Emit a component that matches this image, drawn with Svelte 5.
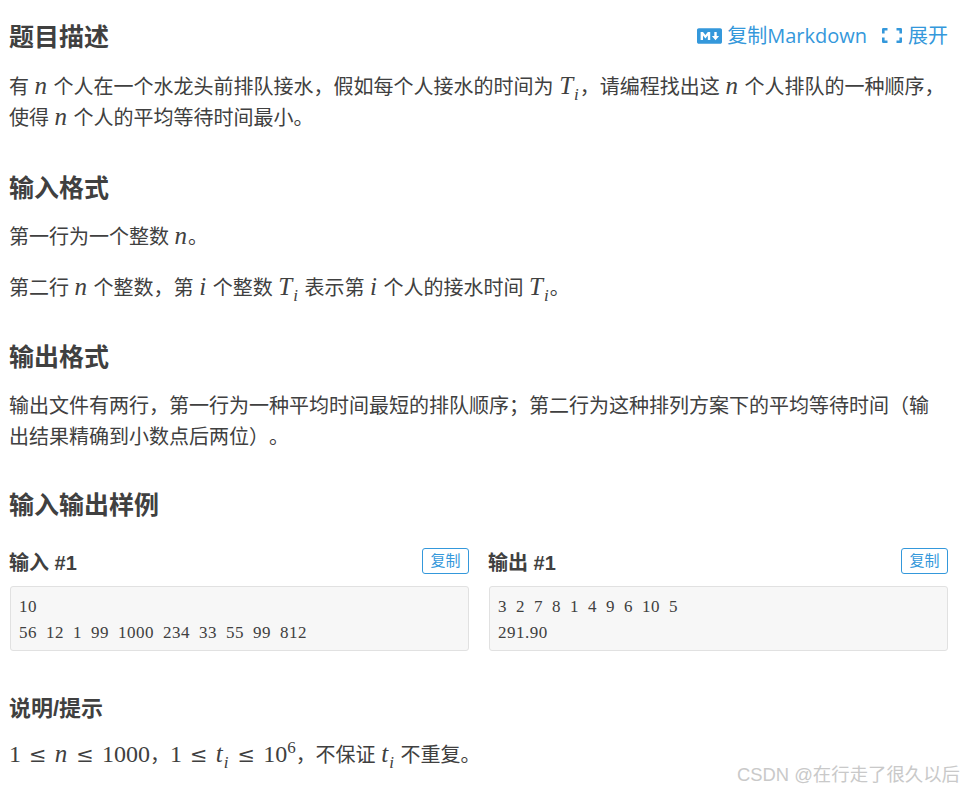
<script>
  const samples = [
    { title: '输入 #1', lines: ['10', '56 12 1 99 1000 234 33 55 99 812'] },
    { title: '输出 #1', lines: ['3 2 7 8 1 4 9 6 10 5', '291.90'] }
  ]
</script>

<main class="page">
  <header class="title-row">
    <h2>题目描述</h2>
    <div class="actions">
      <a class="link">
        <svg class="icon-md" viewBox="0 0 640 512"><path fill="currentColor" d="M593.8 59.1H46.2C20.7 59.1 0 79.8 0 105.2v301.5c0 25.5 20.7 46.2 46.2 46.2h547.7c25.5 0 46.2-20.7 46.1-46.1V105.2c0-25.4-20.7-46.1-46.2-46.1zM338.5 360.6H277v-120l-61.5 76.9-61.5-76.9v120H92.3V151.4h61.5l61.5 76.9 61.5-76.9h61.5v209.2zm135.3 3.1L381.5 256H443V151.4h61.5V256H566z"/></svg>
        复制Markdown
      </a>
      <a class="link">
        <svg class="icon-expand" viewBox="0 0 20 15" fill="none" stroke="currentColor" stroke-width="2.6" stroke-linejoin="round">
          <path d="M1.3 5.5V1.3H5.5M14.5 1.3H18.7V5.5M18.7 9.5V13.7H14.5M5.5 13.7H1.3V9.5"/>
        </svg>
        展开
      </a>
    </div>
  </header>
  <p class="first">有 <i class="m">n</i> 个人在一个水龙头前排队接水，假如每个人接水的时间为 <i class="m">T<sub>i</sub></i>，请编程找出这 <i class="m">n</i> 个人排队的一种顺序，<br />使得 <i class="m">n</i> 个人的平均等待时间最小。</p>

  <h2 class="section s1">输入格式</h2>
  <p>第一行为一个整数 <i class="m">n</i>。</p>
  <p class="next">第二行 <i class="m">n</i> 个整数，第 <i class="m">i</i> 个整数 <i class="m">T<sub>i</sub></i> 表示第 <i class="m">i</i> 个人的接水时间 <i class="m">T<sub>i</sub></i>。</p>

  <h2 class="section s2">输出格式</h2>
  <p>输出文件有两行，第一行为一种平均时间最短的排队顺序；第二行为这种排列方案下的平均等待时间（输<br />出结果精确到小数点后两位）。</p>

  <h2 class="section s3">输入输出样例</h2>
  <div class="samples">
    {#each samples as s}
      <section class="sample">
        <div class="sample-head">
          <h3>{s.title}</h3>
          <button>复制</button>
        </div>
        <pre>{s.lines.join('\n')}</pre>
      </section>
    {/each}
  </div>

  <h3 class="hint-title">说明/提示</h3>
  <p class="hint"><span class="r">1</span> <span class="op">≤</span> <i class="m">n</i> <span class="op">≤</span> <span class="r">1000</span>，<span class="r">1</span> <span class="op">≤</span> <i class="m">t<sub>i</sub></i> <span class="op">≤</span> <span class="r">10<sup>6</sup></span>，不保证 <i class="m">t<sub>i</sub></i> 不重复。</p>
</main>

<div class="watermark">CSDN @在行走了很久以后</div>

<style>
  :global(body) {
    background: #fff;
  }

  .page {
    padding: 18px 15px 0 10px;
    height: 775px;
    overflow: hidden;
    color: #404040;
    font-family: "Liberation Sans", "Noto Sans CJK SC", sans-serif;
    font-size: 20px;
    text-spacing-trim: space-all;
  }

  .title-row {
    display: flex;
    justify-content: space-between;
    align-items: center;
    height: 38px;
  }

  h2 {
    margin: 0 0 0 -1px;
    font-size: 25px;
    line-height: 38px;
    font-weight: 700;
  }

  .s1 {
    margin-top: 35px;
  }

  .s2 {
    margin-top: 34px;
  }

  .s3 {
    margin-top: 33px;
  }

  .actions {
    display: flex;
    gap: 15px;
    margin-top: -3px;
  }

  .link {
    display: flex;
    align-items: center;
    gap: 5px;
    color: #3498db;
    font-family: "Open Sans", "Noto Sans CJK SC", sans-serif;
    font-size: 20px;
    line-height: 30px;
  }

  .icon-md {
    width: 25px;
    height: 20px;
  }

  .icon-expand {
    width: 20px;
    height: 15px;
    margin-right: 1px;
  }

  p {
    margin: 15px 0 0 -1px;
    line-height: 31px;
    white-space: nowrap;
  }

  .first {
    margin-top: 16px;
  }

  .next {
    margin-top: 20px;
  }

  .m {
    font-family: "Liberation Serif", serif;
    font-size: 25px;
    font-style: italic;
    line-height: 0;
    letter-spacing: 1px;
  }

  .r {
    font-family: "Liberation Serif", serif;
    font-size: 24px;
    line-height: 0;
  }

  .op {
    font-family: "DejaVu Serif", serif;
    font-size: 21px;
    line-height: 0;
    margin: 0 2.5px;
  }

  sub,
  sup {
    font-size: 17px;
    line-height: 0;
  }

  .samples {
    display: grid;
    grid-template-columns: 1fr 1fr;
    gap: 20px;
    margin-top: 22px;
  }

  .sample-head {
    display: flex;
    justify-content: space-between;
    align-items: center;
    height: 30px;
  }

  h3 {
    margin: 0 0 0 -1px;
    font-size: 20px;
    font-weight: 700;
  }

  button {
    width: 47px;
    height: 26px;
    padding: 0;
    background: #fff;
    border: 1px solid #3498db;
    border-radius: 3px;
    color: #3498db;
    font-family: inherit;
    font-size: 15px;
    line-height: 22px;
  }

  pre {
    margin: 10px 0 0;
    box-sizing: border-box;
    height: 65px;
    padding: 7px 8px;
    background: #f7f7f7;
    border: 1px solid #e1e1e1;
    border-radius: 3px;
    color: #404040;
    font-family: "Liberation Serif", serif;
    font-size: 17px;
    letter-spacing: 0.5px;
    word-spacing: 4.25px;
    line-height: 25.5px;
  }

  .hint-title {
    margin-top: 41px;
    font-size: 22px;
    line-height: 33px;
  }

  .hint {
    margin-top: 15px;
  }

  .watermark {
    position: absolute;
    right: 3px;
    top: 763px;
    color: #c9c9c9;
    font-family: "Liberation Sans", "Noto Sans CJK SC", sans-serif;
    font-size: 18.4px;
    line-height: 24px;
  }
</style>
